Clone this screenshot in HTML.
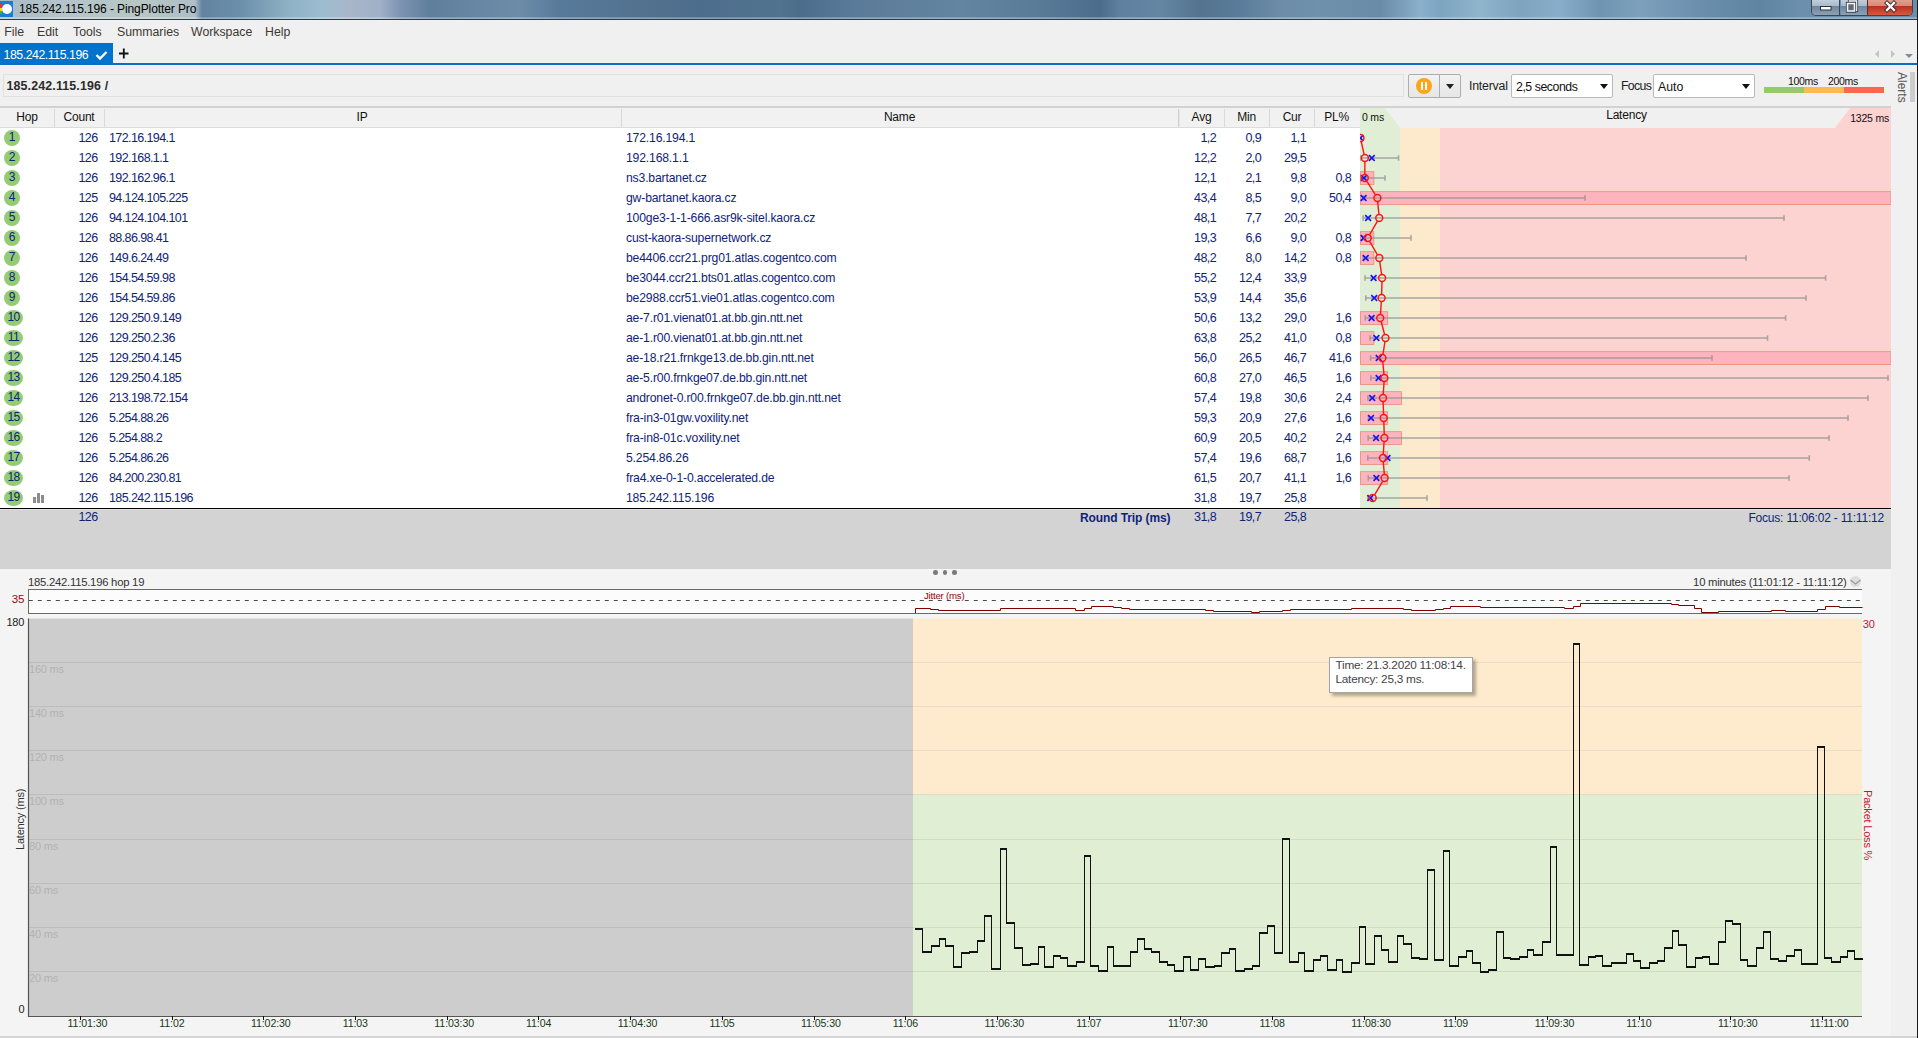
<!DOCTYPE html><html><head><meta charset="utf-8"><style>
*{margin:0;padding:0;box-sizing:border-box}
html,body{width:1918px;height:1038px;overflow:hidden;background:#f0f0f0;font-family:"Liberation Sans",sans-serif;font-size:12px;color:#222}
.a{position:absolute;white-space:nowrap;line-height:1}
.t{color:#10237a;font-size:12px;letter-spacing:-0.35px}
.n{color:#10237a;font-size:12px;letter-spacing:-0.2px}
.hc{color:#111;font-size:12px}
svg{position:absolute;left:0;top:0;overflow:visible}
</style></head><body><div class="a" style="left:0;top:0;width:1918px;height:19px;background:linear-gradient(90deg,#a8bac4 0.00%,#b4c4cb 3.13%,#b8c7c4 7.30%,#adbfc8 10.17%,#6283a0 10.53%,#6b8faa 12.51%,#90b2c6 15.12%,#9cbcd0 16.68%,#a8b6ca 18.25%,#a0b0c8 19.81%,#7d94b2 20.86%,#5f7f9c 22.42%,#6787a4 25.03%,#6c8ca8 27.11%,#587a9a 29.20%,#52728f 33.37%,#4d6d8c 36.50%,#52738f 40.67%,#4c6c8b 41.71%,#5a7a99 44.32%,#5f7f9c 46.92%,#6385a2 50.05%,#5a7b98 54.22%,#4c6c8b 57.35%,#5f809e 58.39%,#6586a3 60.48%,#53738f 62.57%,#5b7c9a 64.65%,#6c8ca8 66.74%,#7091ac 68.82%,#6a8ba7 71.95%,#8ab0cc 74.04%,#7da4c0 75.08%,#8fb4cc 77.16%,#7ea4bf 79.25%,#88adca 81.33%,#6e94b2 83.42%,#7da1bc 85.51%,#6a8eac 88.63%,#5f84a2 91.76%,#6b8fad 93.85%,#6a8eac 100.00%)"></div>
<div class="a" style="left:0;top:17px;width:1918px;height:2px;background:linear-gradient(180deg,rgba(255,255,255,0.15),rgba(255,255,255,0.4))"></div>
<div class="a" style="left:0;top:19px;width:1918px;height:1px;background:#2a3a48"></div>
<div class="a" style="left:0px;top:1px;width:13px;height:16px;background:#1a7fd4;"></div>
<div class="a" style="left:2px;top:4px;width:10px;height:10px;border-radius:50%;background:#fff"></div>
<div class="a" style="left:0px;top:4px;width:2px;height:3px;background:#e33"></div>
<div class="a" style="left:0px;top:8px;width:2px;height:3px;background:#fc3"></div>
<div class="a" style="left:0px;top:11px;width:2px;height:3px;background:#3b3"></div>
<div class="a " style="left:19px;top:2.84px;font-size:12px;color:#000;letter-spacing:-0.1px">185.242.115.196 - PingPlotter Pro</div>
<div class="a" style="left:1811px;top:-2px;width:102px;height:18px;border:1px solid #3a4654;border-top:none;border-radius:0 0 5px 5px;overflow:hidden"><div style="position:absolute;left:0;top:0;width:28px;height:17px;background:linear-gradient(180deg,#c9d6e2 0%,#a9bacb 45%,#6f879e 50%,#8ba1b6 100%);border-right:1px solid #3a4654"></div><div style="position:absolute;left:29px;top:0;width:26px;height:17px;background:linear-gradient(180deg,#c9d6e2 0%,#a9bacb 45%,#6f879e 50%,#8ba1b6 100%)"></div><div style="position:absolute;left:55px;top:0;width:47px;height:17px;background:linear-gradient(180deg,#e9a394 0%,#d88a78 45%,#b8331f 50%,#d45a3e 100%);border-left:1px solid #5a2a20"></div></div>
<svg width="1918" height="1038"><rect x="1820.5" y="6.5" width="10.5" height="3.5" fill="#fff" stroke="#2a3440" stroke-width="1"/><rect x="1849.5" y="1" width="7" height="9.5" fill="none" stroke="#2a3440" stroke-width="3.2"/><rect x="1849.5" y="1" width="7" height="9.5" fill="none" stroke="#f4f4f4" stroke-width="1.6"/><rect x="1847.5" y="3.5" width="7" height="7.5" fill="#5c6b78" stroke="#2a3440" stroke-width="3.2"/><rect x="1847.5" y="3.5" width="7" height="7.5" fill="#5c6b78" stroke="#f4f4f4" stroke-width="1.6"/><path d="M1887 3 L1894 10 M1894 3 L1887 10" stroke="#3a2a2a" stroke-width="4.2" stroke-linecap="square"/><path d="M1887 3 L1894 10 M1894 3 L1887 10" stroke="#fafafa" stroke-width="2.4" stroke-linecap="square"/></svg>
<div class="a" style="left:1917px;top:0px;width:1px;height:1038px;background:#1a1a1a;"></div>
<div class="a " style="left:4.2px;top:25.59px;font-size:12.3px;color:#3d3833">File</div>
<div class="a " style="left:37px;top:25.59px;font-size:12.3px;color:#3d3833">Edit</div>
<div class="a " style="left:73px;top:25.59px;font-size:12.3px;color:#3d3833">Tools</div>
<div class="a " style="left:117px;top:25.59px;font-size:12.3px;color:#3d3833">Summaries</div>
<div class="a " style="left:191px;top:25.59px;font-size:12.3px;color:#3d3833">Workspace</div>
<div class="a " style="left:265px;top:25.59px;font-size:12.3px;color:#3d3833">Help</div>
<div class="a" style="left:0px;top:43px;width:113px;height:22px;background:#0074cc;"></div>
<div class="a" style="left:0px;top:63px;width:1917px;height:2px;background:#0a6fc4;"></div>
<div class="a " style="left:3.5px;top:48.59px;font-size:12.3px;color:#fff;letter-spacing:-0.45px">185.242.115.196</div>
<svg width="1918" height="1038" style="left:0;top:0"><path d="M96.5 55 L100 58.5 L106.5 52" stroke="#fff" stroke-width="2.4" fill="none"/><path d="M119 53.5 H128.5 M123.8 48.5 V58.5" stroke="#111" stroke-width="1.8" fill="none"/><path d="M1879 50 L1875 54 L1879 58 Z M1891 50 L1895 54 L1891 58 Z" fill="#c4c4c4"/><path d="M1905 54 L1913 54 L1909 58 Z" fill="#8a8a8a"/></svg>
<div class="a" style="left:3px;top:74px;width:1401px;height:23px;background:#f0f0f0;border:1px solid #e0e0e0;"></div>
<div class="a " style="left:6.5px;top:79.5px;font-size:12.4px;color:#2b2b2b;font-weight:bold;letter-spacing:0.15px">185.242.115.196 /</div>
<div class="a" style="left:1408px;top:74px;width:53px;height:24px;border:1px solid #adadad;border-radius:2px;background:linear-gradient(180deg,#f2f2f2,#e6e6e6)"></div>
<div class="a" style="left:1439px;top:75px;width:1px;height:22px;background:#adadad;"></div>
<div class="a" style="left:1416px;top:78px;width:16px;height:16px;border-radius:50%;background:#fba51a"></div>
<div class="a" style="left:1421px;top:82px;width:2px;height:8px;background:#fff;"></div>
<div class="a" style="left:1425px;top:82px;width:2px;height:8px;background:#fff;"></div>
<div class="a " style="left:1469px;top:79.59px;font-size:12.3px;color:#222;letter-spacing:-0.2px">Interval</div>
<div class="a" style="left:1511px;top:74px;width:102px;height:24px;border:1px solid #b9b9b9;border-radius:2px;background:#fff"></div>
<div class="a " style="left:1516px;top:80.59px;font-size:12.3px;color:#111;letter-spacing:-0.45px">2,5 seconds</div>
<div class="a " style="left:1621px;top:79.59px;font-size:12.3px;color:#222;letter-spacing:-0.65px">Focus</div>
<div class="a" style="left:1653px;top:74px;width:102px;height:24px;border:1px solid #b9b9b9;border-radius:2px;background:#fff"></div>
<div class="a " style="left:1658px;top:80.59px;font-size:12.3px;color:#111">Auto</div>
<svg width="1918" height="1038"><path d="M1446 84 L1454 84 L1450 89 Z" fill="#222"/><path d="M1600 84 L1608 84 L1604 89 Z" fill="#111"/><path d="M1742 84 L1750 84 L1746 89 Z" fill="#111"/></svg>
<div class="a" style="left:1764px;top:87px;width:40px;height:6px;background:#95c96c;"></div>
<div class="a" style="left:1804px;top:87px;width:40px;height:6px;background:#fdbb4f;"></div>
<div class="a" style="left:1844px;top:87px;width:40px;height:6px;background:#fb6552;"></div>
<div class="a " style="left:1603px;width:400px;top:76.11px;text-align:center;font-size:10.5px;color:#111;letter-spacing:-0.3px">100ms</div>
<div class="a " style="left:1643px;width:400px;top:76.11px;text-align:center;font-size:10.5px;color:#111;letter-spacing:-0.3px">200ms</div>
<div class="a" style="left:1894px;top:72px;font-size:12px;color:#555;transform-origin:0 0;transform:translate(14px,0) rotate(90deg)">Alerts</div>
<div class="a" style="left:1910px;top:72px;width:5px;height:30px;background:#cdcdcd;"></div>
<div class="a" style="left:0px;top:106px;width:1891px;height:2px;background:#d2d2d2;"></div>
<div class="a" style="left:0px;top:108px;width:1360px;height:19px;background:#f1f1f1;"></div>
<div class="a" style="left:0px;top:127px;width:1360px;height:1px;background:#dcdcdc;"></div>
<div class="a" style="left:54px;top:109px;width:1px;height:18px;background:#d9d9d9;"></div>
<div class="a" style="left:104px;top:109px;width:1px;height:18px;background:#d9d9d9;"></div>
<div class="a" style="left:621px;top:109px;width:1px;height:18px;background:#d9d9d9;"></div>
<div class="a" style="left:1224px;top:109px;width:1px;height:18px;background:#d9d9d9;"></div>
<div class="a" style="left:1269px;top:109px;width:1px;height:18px;background:#d9d9d9;"></div>
<div class="a" style="left:1314px;top:109px;width:1px;height:18px;background:#d9d9d9;"></div>
<div class="a" style="left:1178px;top:109px;width:1px;height:18px;background:#cfcfcf;"></div>
<div class="a" style="left:1179px;top:109px;width:1px;height:18px;background:#e8e8e8;"></div>
<div class="a " style="left:-173px;width:400px;top:110.84px;text-align:center;font-size:12px;color:#111;letter-spacing:-0.2px">Hop</div>
<div class="a " style="left:-121px;width:400px;top:110.84px;text-align:center;font-size:12px;color:#111;letter-spacing:-0.2px">Count</div>
<div class="a " style="left:162px;width:400px;top:110.84px;text-align:center;font-size:12px;color:#111;letter-spacing:-0.2px">IP</div>
<div class="a " style="left:699.5px;width:400px;top:110.84px;text-align:center;font-size:12px;color:#111;letter-spacing:-0.2px">Name</div>
<div class="a " style="left:1001.5px;width:400px;top:110.84px;text-align:center;font-size:12px;color:#111;letter-spacing:-0.2px">Avg</div>
<div class="a " style="left:1046.5px;width:400px;top:110.84px;text-align:center;font-size:12px;color:#111;letter-spacing:-0.2px">Min</div>
<div class="a " style="left:1092px;width:400px;top:110.84px;text-align:center;font-size:12px;color:#111;letter-spacing:-0.2px">Cur</div>
<div class="a " style="left:1136.5px;width:400px;top:110.84px;text-align:center;font-size:12px;color:#111;letter-spacing:-0.2px">PL%</div>
<div class="a" style="left:0px;top:128px;width:1360px;height:380px;background:#ffffff;"></div>
<div class="a" style="left:0px;top:508px;width:1891px;height:1px;background:#000;"></div>
<div class="a" style="left:0px;top:509px;width:1891px;height:60px;background:#d3d3d3;"></div>
<div class="a" style="left:0px;top:509px;width:1891px;height:1px;background:#e2e2e2;"></div>
<div class="a" style="left:4px;top:130px;width:16px;height:16px;border-radius:50%;background:#93cc73"></div>
<div class="a " style="left:-188px;width:400px;top:130.54px;text-align:center;font-size:12px;color:#10237a">1</div>
<div class="a t" style="right:1820.5px;top:131.62px;text-align:right;font-size:12.5px;letter-spacing:-0.6px">126</div>
<div class="a t" style="left:109px;top:131.62px;font-size:12.5px;letter-spacing:-0.6px">172.16.194.1</div>
<div class="a n" style="left:626px;top:131.87px;font-size:12.2px;letter-spacing:-0.17px">172.16.194.1</div>
<div class="a t" style="right:702px;top:131.62px;text-align:right;font-size:12.5px;letter-spacing:-0.6px">1,2</div>
<div class="a t" style="right:657px;top:131.62px;text-align:right;font-size:12.5px;letter-spacing:-0.6px">0,9</div>
<div class="a t" style="right:612px;top:131.62px;text-align:right;font-size:12.5px;letter-spacing:-0.6px">1,1</div>
<div class="a" style="left:4px;top:150px;width:16px;height:16px;border-radius:50%;background:#93cc73"></div>
<div class="a " style="left:-188px;width:400px;top:150.54px;text-align:center;font-size:12px;color:#10237a">2</div>
<div class="a t" style="right:1820.5px;top:151.62px;text-align:right;font-size:12.5px;letter-spacing:-0.6px">126</div>
<div class="a t" style="left:109px;top:151.62px;font-size:12.5px;letter-spacing:-0.6px">192.168.1.1</div>
<div class="a n" style="left:626px;top:151.87px;font-size:12.2px;letter-spacing:-0.17px">192.168.1.1</div>
<div class="a t" style="right:702px;top:151.62px;text-align:right;font-size:12.5px;letter-spacing:-0.6px">12,2</div>
<div class="a t" style="right:657px;top:151.62px;text-align:right;font-size:12.5px;letter-spacing:-0.6px">2,0</div>
<div class="a t" style="right:612px;top:151.62px;text-align:right;font-size:12.5px;letter-spacing:-0.6px">29,5</div>
<div class="a" style="left:4px;top:170px;width:16px;height:16px;border-radius:50%;background:#93cc73"></div>
<div class="a " style="left:-188px;width:400px;top:170.54px;text-align:center;font-size:12px;color:#10237a">3</div>
<div class="a t" style="right:1820.5px;top:171.62px;text-align:right;font-size:12.5px;letter-spacing:-0.6px">126</div>
<div class="a t" style="left:109px;top:171.62px;font-size:12.5px;letter-spacing:-0.6px">192.162.96.1</div>
<div class="a n" style="left:626px;top:171.87px;font-size:12.2px;letter-spacing:-0.17px">ns3.bartanet.cz</div>
<div class="a t" style="right:702px;top:171.62px;text-align:right;font-size:12.5px;letter-spacing:-0.6px">12,1</div>
<div class="a t" style="right:657px;top:171.62px;text-align:right;font-size:12.5px;letter-spacing:-0.6px">2,1</div>
<div class="a t" style="right:612px;top:171.62px;text-align:right;font-size:12.5px;letter-spacing:-0.6px">9,8</div>
<div class="a t" style="right:567px;top:171.62px;text-align:right;font-size:12.5px;letter-spacing:-0.6px">0,8</div>
<div class="a" style="left:4px;top:190px;width:16px;height:16px;border-radius:50%;background:#93cc73"></div>
<div class="a " style="left:-188px;width:400px;top:190.54px;text-align:center;font-size:12px;color:#10237a">4</div>
<div class="a t" style="right:1820.5px;top:191.62px;text-align:right;font-size:12.5px;letter-spacing:-0.6px">125</div>
<div class="a t" style="left:109px;top:191.62px;font-size:12.5px;letter-spacing:-0.6px">94.124.105.225</div>
<div class="a n" style="left:626px;top:191.87px;font-size:12.2px;letter-spacing:-0.17px">gw-bartanet.kaora.cz</div>
<div class="a t" style="right:702px;top:191.62px;text-align:right;font-size:12.5px;letter-spacing:-0.6px">43,4</div>
<div class="a t" style="right:657px;top:191.62px;text-align:right;font-size:12.5px;letter-spacing:-0.6px">8,5</div>
<div class="a t" style="right:612px;top:191.62px;text-align:right;font-size:12.5px;letter-spacing:-0.6px">9,0</div>
<div class="a t" style="right:567px;top:191.62px;text-align:right;font-size:12.5px;letter-spacing:-0.6px">50,4</div>
<div class="a" style="left:4px;top:210px;width:16px;height:16px;border-radius:50%;background:#93cc73"></div>
<div class="a " style="left:-188px;width:400px;top:210.54px;text-align:center;font-size:12px;color:#10237a">5</div>
<div class="a t" style="right:1820.5px;top:211.62px;text-align:right;font-size:12.5px;letter-spacing:-0.6px">126</div>
<div class="a t" style="left:109px;top:211.62px;font-size:12.5px;letter-spacing:-0.6px">94.124.104.101</div>
<div class="a n" style="left:626px;top:211.87px;font-size:12.2px;letter-spacing:-0.17px">100ge3-1-1-666.asr9k-sitel.kaora.cz</div>
<div class="a t" style="right:702px;top:211.62px;text-align:right;font-size:12.5px;letter-spacing:-0.6px">48,1</div>
<div class="a t" style="right:657px;top:211.62px;text-align:right;font-size:12.5px;letter-spacing:-0.6px">7,7</div>
<div class="a t" style="right:612px;top:211.62px;text-align:right;font-size:12.5px;letter-spacing:-0.6px">20,2</div>
<div class="a" style="left:4px;top:230px;width:16px;height:16px;border-radius:50%;background:#93cc73"></div>
<div class="a " style="left:-188px;width:400px;top:230.54px;text-align:center;font-size:12px;color:#10237a">6</div>
<div class="a t" style="right:1820.5px;top:231.62px;text-align:right;font-size:12.5px;letter-spacing:-0.6px">126</div>
<div class="a t" style="left:109px;top:231.62px;font-size:12.5px;letter-spacing:-0.6px">88.86.98.41</div>
<div class="a n" style="left:626px;top:231.87px;font-size:12.2px;letter-spacing:-0.17px">cust-kaora-supernetwork.cz</div>
<div class="a t" style="right:702px;top:231.62px;text-align:right;font-size:12.5px;letter-spacing:-0.6px">19,3</div>
<div class="a t" style="right:657px;top:231.62px;text-align:right;font-size:12.5px;letter-spacing:-0.6px">6,6</div>
<div class="a t" style="right:612px;top:231.62px;text-align:right;font-size:12.5px;letter-spacing:-0.6px">9,0</div>
<div class="a t" style="right:567px;top:231.62px;text-align:right;font-size:12.5px;letter-spacing:-0.6px">0,8</div>
<div class="a" style="left:4px;top:250px;width:16px;height:16px;border-radius:50%;background:#93cc73"></div>
<div class="a " style="left:-188px;width:400px;top:250.54px;text-align:center;font-size:12px;color:#10237a">7</div>
<div class="a t" style="right:1820.5px;top:251.62px;text-align:right;font-size:12.5px;letter-spacing:-0.6px">126</div>
<div class="a t" style="left:109px;top:251.62px;font-size:12.5px;letter-spacing:-0.6px">149.6.24.49</div>
<div class="a n" style="left:626px;top:251.87px;font-size:12.2px;letter-spacing:-0.17px">be4406.ccr21.prg01.atlas.cogentco.com</div>
<div class="a t" style="right:702px;top:251.62px;text-align:right;font-size:12.5px;letter-spacing:-0.6px">48,2</div>
<div class="a t" style="right:657px;top:251.62px;text-align:right;font-size:12.5px;letter-spacing:-0.6px">8,0</div>
<div class="a t" style="right:612px;top:251.62px;text-align:right;font-size:12.5px;letter-spacing:-0.6px">14,2</div>
<div class="a t" style="right:567px;top:251.62px;text-align:right;font-size:12.5px;letter-spacing:-0.6px">0,8</div>
<div class="a" style="left:4px;top:270px;width:16px;height:16px;border-radius:50%;background:#93cc73"></div>
<div class="a " style="left:-188px;width:400px;top:270.54px;text-align:center;font-size:12px;color:#10237a">8</div>
<div class="a t" style="right:1820.5px;top:271.62px;text-align:right;font-size:12.5px;letter-spacing:-0.6px">126</div>
<div class="a t" style="left:109px;top:271.62px;font-size:12.5px;letter-spacing:-0.6px">154.54.59.98</div>
<div class="a n" style="left:626px;top:271.87px;font-size:12.2px;letter-spacing:-0.17px">be3044.ccr21.bts01.atlas.cogentco.com</div>
<div class="a t" style="right:702px;top:271.62px;text-align:right;font-size:12.5px;letter-spacing:-0.6px">55,2</div>
<div class="a t" style="right:657px;top:271.62px;text-align:right;font-size:12.5px;letter-spacing:-0.6px">12,4</div>
<div class="a t" style="right:612px;top:271.62px;text-align:right;font-size:12.5px;letter-spacing:-0.6px">33,9</div>
<div class="a" style="left:4px;top:290px;width:16px;height:16px;border-radius:50%;background:#93cc73"></div>
<div class="a " style="left:-188px;width:400px;top:290.54px;text-align:center;font-size:12px;color:#10237a">9</div>
<div class="a t" style="right:1820.5px;top:291.62px;text-align:right;font-size:12.5px;letter-spacing:-0.6px">126</div>
<div class="a t" style="left:109px;top:291.62px;font-size:12.5px;letter-spacing:-0.6px">154.54.59.86</div>
<div class="a n" style="left:626px;top:291.87px;font-size:12.2px;letter-spacing:-0.17px">be2988.ccr51.vie01.atlas.cogentco.com</div>
<div class="a t" style="right:702px;top:291.62px;text-align:right;font-size:12.5px;letter-spacing:-0.6px">53,9</div>
<div class="a t" style="right:657px;top:291.62px;text-align:right;font-size:12.5px;letter-spacing:-0.6px">14,4</div>
<div class="a t" style="right:612px;top:291.62px;text-align:right;font-size:12.5px;letter-spacing:-0.6px">35,6</div>
<div class="a" style="left:4px;top:310px;width:19px;height:16px;border-radius:50%;background:#93cc73"></div>
<div class="a " style="left:-186.5px;width:400px;top:310.54px;text-align:center;font-size:12px;color:#10237a;letter-spacing:-0.6px">10</div>
<div class="a t" style="right:1820.5px;top:311.62px;text-align:right;font-size:12.5px;letter-spacing:-0.6px">126</div>
<div class="a t" style="left:109px;top:311.62px;font-size:12.5px;letter-spacing:-0.6px">129.250.9.149</div>
<div class="a n" style="left:626px;top:311.87px;font-size:12.2px;letter-spacing:-0.17px">ae-7.r01.vienat01.at.bb.gin.ntt.net</div>
<div class="a t" style="right:702px;top:311.62px;text-align:right;font-size:12.5px;letter-spacing:-0.6px">50,6</div>
<div class="a t" style="right:657px;top:311.62px;text-align:right;font-size:12.5px;letter-spacing:-0.6px">13,2</div>
<div class="a t" style="right:612px;top:311.62px;text-align:right;font-size:12.5px;letter-spacing:-0.6px">29,0</div>
<div class="a t" style="right:567px;top:311.62px;text-align:right;font-size:12.5px;letter-spacing:-0.6px">1,6</div>
<div class="a" style="left:4px;top:330px;width:19px;height:16px;border-radius:50%;background:#93cc73"></div>
<div class="a " style="left:-186.5px;width:400px;top:330.54px;text-align:center;font-size:12px;color:#10237a;letter-spacing:-0.6px">11</div>
<div class="a t" style="right:1820.5px;top:331.62px;text-align:right;font-size:12.5px;letter-spacing:-0.6px">126</div>
<div class="a t" style="left:109px;top:331.62px;font-size:12.5px;letter-spacing:-0.6px">129.250.2.36</div>
<div class="a n" style="left:626px;top:331.87px;font-size:12.2px;letter-spacing:-0.17px">ae-1.r00.vienat01.at.bb.gin.ntt.net</div>
<div class="a t" style="right:702px;top:331.62px;text-align:right;font-size:12.5px;letter-spacing:-0.6px">63,8</div>
<div class="a t" style="right:657px;top:331.62px;text-align:right;font-size:12.5px;letter-spacing:-0.6px">25,2</div>
<div class="a t" style="right:612px;top:331.62px;text-align:right;font-size:12.5px;letter-spacing:-0.6px">41,0</div>
<div class="a t" style="right:567px;top:331.62px;text-align:right;font-size:12.5px;letter-spacing:-0.6px">0,8</div>
<div class="a" style="left:4px;top:350px;width:19px;height:16px;border-radius:50%;background:#93cc73"></div>
<div class="a " style="left:-186.5px;width:400px;top:350.54px;text-align:center;font-size:12px;color:#10237a;letter-spacing:-0.6px">12</div>
<div class="a t" style="right:1820.5px;top:351.62px;text-align:right;font-size:12.5px;letter-spacing:-0.6px">125</div>
<div class="a t" style="left:109px;top:351.62px;font-size:12.5px;letter-spacing:-0.6px">129.250.4.145</div>
<div class="a n" style="left:626px;top:351.87px;font-size:12.2px;letter-spacing:-0.17px">ae-18.r21.frnkge13.de.bb.gin.ntt.net</div>
<div class="a t" style="right:702px;top:351.62px;text-align:right;font-size:12.5px;letter-spacing:-0.6px">56,0</div>
<div class="a t" style="right:657px;top:351.62px;text-align:right;font-size:12.5px;letter-spacing:-0.6px">26,5</div>
<div class="a t" style="right:612px;top:351.62px;text-align:right;font-size:12.5px;letter-spacing:-0.6px">46,7</div>
<div class="a t" style="right:567px;top:351.62px;text-align:right;font-size:12.5px;letter-spacing:-0.6px">41,6</div>
<div class="a" style="left:4px;top:370px;width:19px;height:16px;border-radius:50%;background:#93cc73"></div>
<div class="a " style="left:-186.5px;width:400px;top:370.54px;text-align:center;font-size:12px;color:#10237a;letter-spacing:-0.6px">13</div>
<div class="a t" style="right:1820.5px;top:371.62px;text-align:right;font-size:12.5px;letter-spacing:-0.6px">126</div>
<div class="a t" style="left:109px;top:371.62px;font-size:12.5px;letter-spacing:-0.6px">129.250.4.185</div>
<div class="a n" style="left:626px;top:371.87px;font-size:12.2px;letter-spacing:-0.17px">ae-5.r00.frnkge07.de.bb.gin.ntt.net</div>
<div class="a t" style="right:702px;top:371.62px;text-align:right;font-size:12.5px;letter-spacing:-0.6px">60,8</div>
<div class="a t" style="right:657px;top:371.62px;text-align:right;font-size:12.5px;letter-spacing:-0.6px">27,0</div>
<div class="a t" style="right:612px;top:371.62px;text-align:right;font-size:12.5px;letter-spacing:-0.6px">46,5</div>
<div class="a t" style="right:567px;top:371.62px;text-align:right;font-size:12.5px;letter-spacing:-0.6px">1,6</div>
<div class="a" style="left:4px;top:390px;width:19px;height:16px;border-radius:50%;background:#93cc73"></div>
<div class="a " style="left:-186.5px;width:400px;top:390.54px;text-align:center;font-size:12px;color:#10237a;letter-spacing:-0.6px">14</div>
<div class="a t" style="right:1820.5px;top:391.62px;text-align:right;font-size:12.5px;letter-spacing:-0.6px">126</div>
<div class="a t" style="left:109px;top:391.62px;font-size:12.5px;letter-spacing:-0.6px">213.198.72.154</div>
<div class="a n" style="left:626px;top:391.87px;font-size:12.2px;letter-spacing:-0.17px">andronet-0.r00.frnkge07.de.bb.gin.ntt.net</div>
<div class="a t" style="right:702px;top:391.62px;text-align:right;font-size:12.5px;letter-spacing:-0.6px">57,4</div>
<div class="a t" style="right:657px;top:391.62px;text-align:right;font-size:12.5px;letter-spacing:-0.6px">19,8</div>
<div class="a t" style="right:612px;top:391.62px;text-align:right;font-size:12.5px;letter-spacing:-0.6px">30,6</div>
<div class="a t" style="right:567px;top:391.62px;text-align:right;font-size:12.5px;letter-spacing:-0.6px">2,4</div>
<div class="a" style="left:4px;top:410px;width:19px;height:16px;border-radius:50%;background:#93cc73"></div>
<div class="a " style="left:-186.5px;width:400px;top:410.54px;text-align:center;font-size:12px;color:#10237a;letter-spacing:-0.6px">15</div>
<div class="a t" style="right:1820.5px;top:411.62px;text-align:right;font-size:12.5px;letter-spacing:-0.6px">126</div>
<div class="a t" style="left:109px;top:411.62px;font-size:12.5px;letter-spacing:-0.6px">5.254.88.26</div>
<div class="a n" style="left:626px;top:411.87px;font-size:12.2px;letter-spacing:-0.17px">fra-in3-01gw.voxility.net</div>
<div class="a t" style="right:702px;top:411.62px;text-align:right;font-size:12.5px;letter-spacing:-0.6px">59,3</div>
<div class="a t" style="right:657px;top:411.62px;text-align:right;font-size:12.5px;letter-spacing:-0.6px">20,9</div>
<div class="a t" style="right:612px;top:411.62px;text-align:right;font-size:12.5px;letter-spacing:-0.6px">27,6</div>
<div class="a t" style="right:567px;top:411.62px;text-align:right;font-size:12.5px;letter-spacing:-0.6px">1,6</div>
<div class="a" style="left:4px;top:430px;width:19px;height:16px;border-radius:50%;background:#93cc73"></div>
<div class="a " style="left:-186.5px;width:400px;top:430.54px;text-align:center;font-size:12px;color:#10237a;letter-spacing:-0.6px">16</div>
<div class="a t" style="right:1820.5px;top:431.62px;text-align:right;font-size:12.5px;letter-spacing:-0.6px">126</div>
<div class="a t" style="left:109px;top:431.62px;font-size:12.5px;letter-spacing:-0.6px">5.254.88.2</div>
<div class="a n" style="left:626px;top:431.87px;font-size:12.2px;letter-spacing:-0.17px">fra-in8-01c.voxility.net</div>
<div class="a t" style="right:702px;top:431.62px;text-align:right;font-size:12.5px;letter-spacing:-0.6px">60,9</div>
<div class="a t" style="right:657px;top:431.62px;text-align:right;font-size:12.5px;letter-spacing:-0.6px">20,5</div>
<div class="a t" style="right:612px;top:431.62px;text-align:right;font-size:12.5px;letter-spacing:-0.6px">40,2</div>
<div class="a t" style="right:567px;top:431.62px;text-align:right;font-size:12.5px;letter-spacing:-0.6px">2,4</div>
<div class="a" style="left:4px;top:450px;width:19px;height:16px;border-radius:50%;background:#93cc73"></div>
<div class="a " style="left:-186.5px;width:400px;top:450.54px;text-align:center;font-size:12px;color:#10237a;letter-spacing:-0.6px">17</div>
<div class="a t" style="right:1820.5px;top:451.62px;text-align:right;font-size:12.5px;letter-spacing:-0.6px">126</div>
<div class="a t" style="left:109px;top:451.62px;font-size:12.5px;letter-spacing:-0.6px">5.254.86.26</div>
<div class="a n" style="left:626px;top:451.87px;font-size:12.2px;letter-spacing:-0.17px">5.254.86.26</div>
<div class="a t" style="right:702px;top:451.62px;text-align:right;font-size:12.5px;letter-spacing:-0.6px">57,4</div>
<div class="a t" style="right:657px;top:451.62px;text-align:right;font-size:12.5px;letter-spacing:-0.6px">19,6</div>
<div class="a t" style="right:612px;top:451.62px;text-align:right;font-size:12.5px;letter-spacing:-0.6px">68,7</div>
<div class="a t" style="right:567px;top:451.62px;text-align:right;font-size:12.5px;letter-spacing:-0.6px">1,6</div>
<div class="a" style="left:4px;top:470px;width:19px;height:16px;border-radius:50%;background:#93cc73"></div>
<div class="a " style="left:-186.5px;width:400px;top:470.54px;text-align:center;font-size:12px;color:#10237a;letter-spacing:-0.6px">18</div>
<div class="a t" style="right:1820.5px;top:471.62px;text-align:right;font-size:12.5px;letter-spacing:-0.6px">126</div>
<div class="a t" style="left:109px;top:471.62px;font-size:12.5px;letter-spacing:-0.6px">84.200.230.81</div>
<div class="a n" style="left:626px;top:471.87px;font-size:12.2px;letter-spacing:-0.17px">fra4.xe-0-1-0.accelerated.de</div>
<div class="a t" style="right:702px;top:471.62px;text-align:right;font-size:12.5px;letter-spacing:-0.6px">61,5</div>
<div class="a t" style="right:657px;top:471.62px;text-align:right;font-size:12.5px;letter-spacing:-0.6px">20,7</div>
<div class="a t" style="right:612px;top:471.62px;text-align:right;font-size:12.5px;letter-spacing:-0.6px">41,1</div>
<div class="a t" style="right:567px;top:471.62px;text-align:right;font-size:12.5px;letter-spacing:-0.6px">1,6</div>
<div class="a" style="left:4px;top:490px;width:19px;height:16px;border-radius:50%;background:#93cc73"></div>
<div class="a " style="left:-186.5px;width:400px;top:490.54px;text-align:center;font-size:12px;color:#10237a;letter-spacing:-0.6px">19</div>
<div class="a t" style="right:1820.5px;top:491.62px;text-align:right;font-size:12.5px;letter-spacing:-0.6px">126</div>
<div class="a t" style="left:109px;top:491.62px;font-size:12.5px;letter-spacing:-0.6px">185.242.115.196</div>
<div class="a n" style="left:626px;top:491.87px;font-size:12.2px;letter-spacing:-0.17px">185.242.115.196</div>
<div class="a t" style="right:702px;top:491.62px;text-align:right;font-size:12.5px;letter-spacing:-0.6px">31,8</div>
<div class="a t" style="right:657px;top:491.62px;text-align:right;font-size:12.5px;letter-spacing:-0.6px">19,7</div>
<div class="a t" style="right:612px;top:491.62px;text-align:right;font-size:12.5px;letter-spacing:-0.6px">25,8</div>
<div class="a" style="left:33px;top:497px;width:2.5px;height:6px;background:#8c8c8c;"></div>
<div class="a" style="left:37px;top:493.3px;width:2.5px;height:9.7px;background:#8c8c8c;"></div>
<div class="a" style="left:41px;top:495.2px;width:2.5px;height:7.8px;background:#8c8c8c;"></div>
<div class="a t" style="right:1820.5px;top:511.42px;text-align:right;font-size:12.5px;letter-spacing:-0.6px">126</div>
<div class="a " style="right:747.5px;top:511.84px;text-align:right;font-size:12px;color:#10237a;font-weight:bold;letter-spacing:-0.1px">Round Trip (ms)</div>
<div class="a t" style="right:702px;top:511.42px;text-align:right;font-size:12.5px;letter-spacing:-0.6px">31,8</div>
<div class="a t" style="right:657px;top:511.42px;text-align:right;font-size:12.5px;letter-spacing:-0.6px">19,7</div>
<div class="a t" style="right:612px;top:511.42px;text-align:right;font-size:12.5px;letter-spacing:-0.6px">25,8</div>
<div class="a n" style="right:34px;top:511.84px;text-align:right;font-size:12px;letter-spacing:-0.2px">Focus: 11:06:02 - 11:11:12</div>
<svg width="1918" height="1038"><defs><clipPath id="lc"><rect x="1360" y="100" width="531" height="410"/></clipPath></defs><g clip-path="url(#lc)"><rect x="1360" y="128" width="40" height="380" fill="#dfeed4"/><rect x="1400" y="128" width="40" height="380" fill="#fde9cc"/><rect x="1440" y="128" width="451" height="380" fill="#fdd3d1"/><polygon points="1360,108 1385,108 1400,128 1360,128" fill="#dfeed4"/><polygon points="1850,108 1891,108 1891,128 1835,128" fill="#fdd3d1"/><rect x="1360.4" y="171.7" width="13.46" height="12.8" fill="#feb4be" stroke="#ea8a78" stroke-width="0.8"/><rect x="1360.4" y="191.7" width="530.60" height="12.8" fill="#feb4be" stroke="#ea8a78" stroke-width="0.8"/><rect x="1360.4" y="231.7" width="13.46" height="12.8" fill="#feb4be" stroke="#ea8a78" stroke-width="0.8"/><rect x="1360.4" y="251.7" width="13.46" height="12.8" fill="#feb4be" stroke="#ea8a78" stroke-width="0.8"/><rect x="1360.4" y="311.7" width="27.33" height="12.8" fill="#feb4be" stroke="#ea8a78" stroke-width="0.8"/><rect x="1360.4" y="331.7" width="13.46" height="12.8" fill="#feb4be" stroke="#ea8a78" stroke-width="0.8"/><rect x="1360.4" y="351.7" width="530.60" height="12.8" fill="#feb4be" stroke="#ea8a78" stroke-width="0.8"/><rect x="1360.4" y="371.7" width="27.33" height="12.8" fill="#feb4be" stroke="#ea8a78" stroke-width="0.8"/><rect x="1360.4" y="391.7" width="41.19" height="12.8" fill="#feb4be" stroke="#ea8a78" stroke-width="0.8"/><rect x="1360.4" y="411.7" width="27.33" height="12.8" fill="#feb4be" stroke="#ea8a78" stroke-width="0.8"/><rect x="1360.4" y="431.7" width="41.19" height="12.8" fill="#feb4be" stroke="#ea8a78" stroke-width="0.8"/><rect x="1360.4" y="451.7" width="27.33" height="12.8" fill="#feb4be" stroke="#ea8a78" stroke-width="0.8"/><rect x="1360.4" y="471.7" width="27.33" height="12.8" fill="#feb4be" stroke="#ea8a78" stroke-width="0.8"/><path d="M1360.8 158 H1398.5 M1360.8 155.3 V160.7 M1398.5 155.3 V160.7" stroke="#8f8f8f" stroke-opacity="0.75" stroke-width="1.6" fill="none"/><path d="M1360.8 178 H1385.0 M1360.8 175.3 V180.7 M1385.0 175.3 V180.7" stroke="#8f8f8f" stroke-opacity="0.75" stroke-width="1.6" fill="none"/><path d="M1363.4 198 H1585.0 M1363.4 195.3 V200.7 M1585.0 195.3 V200.7" stroke="#8f8f8f" stroke-opacity="0.75" stroke-width="1.6" fill="none"/><path d="M1363.1 218 H1784.0 M1363.1 215.3 V220.7 M1784.0 215.3 V220.7" stroke="#8f8f8f" stroke-opacity="0.75" stroke-width="1.6" fill="none"/><path d="M1362.6 238 H1411.0 M1362.6 235.3 V240.7 M1411.0 235.3 V240.7" stroke="#8f8f8f" stroke-opacity="0.75" stroke-width="1.6" fill="none"/><path d="M1363.2 258 H1746.0 M1363.2 255.3 V260.7 M1746.0 255.3 V260.7" stroke="#8f8f8f" stroke-opacity="0.75" stroke-width="1.6" fill="none"/><path d="M1365.0 278 H1825.6 M1365.0 275.3 V280.7 M1825.6 275.3 V280.7" stroke="#8f8f8f" stroke-opacity="0.75" stroke-width="1.6" fill="none"/><path d="M1365.8 298 H1806.0 M1365.8 295.3 V300.7 M1806.0 295.3 V300.7" stroke="#8f8f8f" stroke-opacity="0.75" stroke-width="1.6" fill="none"/><path d="M1365.3 318 H1785.6 M1365.3 315.3 V320.7 M1785.6 315.3 V320.7" stroke="#8f8f8f" stroke-opacity="0.75" stroke-width="1.6" fill="none"/><path d="M1370.1 338 H1767.5 M1370.1 335.3 V340.7 M1767.5 335.3 V340.7" stroke="#8f8f8f" stroke-opacity="0.75" stroke-width="1.6" fill="none"/><path d="M1370.6 358 H1712.0 M1370.6 355.3 V360.7 M1712.0 355.3 V360.7" stroke="#8f8f8f" stroke-opacity="0.75" stroke-width="1.6" fill="none"/><path d="M1370.8 378 H1888.0 M1370.8 375.3 V380.7 M1888.0 375.3 V380.7" stroke="#8f8f8f" stroke-opacity="0.75" stroke-width="1.6" fill="none"/><path d="M1367.9 398 H1868.0 M1367.9 395.3 V400.7 M1868.0 395.3 V400.7" stroke="#8f8f8f" stroke-opacity="0.75" stroke-width="1.6" fill="none"/><path d="M1368.4 418 H1848.0 M1368.4 415.3 V420.7 M1848.0 415.3 V420.7" stroke="#8f8f8f" stroke-opacity="0.75" stroke-width="1.6" fill="none"/><path d="M1368.2 438 H1829.0 M1368.2 435.3 V440.7 M1829.0 435.3 V440.7" stroke="#8f8f8f" stroke-opacity="0.75" stroke-width="1.6" fill="none"/><path d="M1367.8 458 H1809.3 M1367.8 455.3 V460.7 M1809.3 455.3 V460.7" stroke="#8f8f8f" stroke-opacity="0.75" stroke-width="1.6" fill="none"/><path d="M1368.3 478 H1789.0 M1368.3 475.3 V480.7 M1789.0 475.3 V480.7" stroke="#8f8f8f" stroke-opacity="0.75" stroke-width="1.6" fill="none"/><path d="M1367.9 498 H1427.0 M1367.9 495.3 V500.7 M1427.0 495.3 V500.7" stroke="#8f8f8f" stroke-opacity="0.75" stroke-width="1.6" fill="none"/><path d="M1357.5 135.1 L1363.3 140.9 M1357.5 140.9 L1363.3 135.1" stroke="#1414f0" stroke-width="1.6"/><path d="M1368.9 155.1 L1374.7 160.9 M1368.9 160.9 L1374.7 155.1" stroke="#1414f0" stroke-width="1.6"/><path d="M1361.0 175.1 L1366.8 180.9 M1361.0 180.9 L1366.8 175.1" stroke="#1414f0" stroke-width="1.6"/><path d="M1360.7 195.1 L1366.5 200.9 M1360.7 200.9 L1366.5 195.1" stroke="#1414f0" stroke-width="1.6"/><path d="M1365.2 215.1 L1371.0 220.9 M1365.2 220.9 L1371.0 215.1" stroke="#1414f0" stroke-width="1.6"/><path d="M1360.7 235.1 L1366.5 240.9 M1360.7 240.9 L1366.5 235.1" stroke="#1414f0" stroke-width="1.6"/><path d="M1362.8 255.1 L1368.6 260.9 M1362.8 260.9 L1368.6 255.1" stroke="#1414f0" stroke-width="1.6"/><path d="M1370.7 275.1 L1376.5 280.9 M1370.7 280.9 L1376.5 275.1" stroke="#1414f0" stroke-width="1.6"/><path d="M1371.3 295.1 L1377.1 300.9 M1371.3 300.9 L1377.1 295.1" stroke="#1414f0" stroke-width="1.6"/><path d="M1368.7 315.1 L1374.5 320.9 M1368.7 320.9 L1374.5 315.1" stroke="#1414f0" stroke-width="1.6"/><path d="M1373.5 335.1 L1379.3 340.9 M1373.5 340.9 L1379.3 335.1" stroke="#1414f0" stroke-width="1.6"/><path d="M1375.8 355.1 L1381.6 360.9 M1375.8 360.9 L1381.6 355.1" stroke="#1414f0" stroke-width="1.6"/><path d="M1375.7 375.1 L1381.5 380.9 M1375.7 380.9 L1381.5 375.1" stroke="#1414f0" stroke-width="1.6"/><path d="M1369.3 395.1 L1375.1 400.9 M1369.3 400.9 L1375.1 395.1" stroke="#1414f0" stroke-width="1.6"/><path d="M1368.1 415.1 L1373.9 420.9 M1368.1 420.9 L1373.9 415.1" stroke="#1414f0" stroke-width="1.6"/><path d="M1373.2 435.1 L1379.0 440.9 M1373.2 440.9 L1379.0 435.1" stroke="#1414f0" stroke-width="1.6"/><path d="M1384.6 455.1 L1390.4 460.9 M1384.6 460.9 L1390.4 455.1" stroke="#1414f0" stroke-width="1.6"/><path d="M1373.5 475.1 L1379.3 480.9 M1373.5 480.9 L1379.3 475.1" stroke="#1414f0" stroke-width="1.6"/><path d="M1367.4 495.1 L1373.2 500.9 M1367.4 500.9 L1373.2 495.1" stroke="#1414f0" stroke-width="1.6"/><path d="M1361.32 141.81 L1364.04 154.19 M1364.87 161.90 L1364.85 174.10 M1366.91 181.31 L1375.29 194.69 M1377.72 201.88 L1378.88 214.12 M1377.29 221.38 L1369.67 234.62 M1369.67 241.38 L1377.33 254.62 M1379.82 261.86 L1381.54 274.14 M1381.98 281.90 L1381.66 294.10 M1381.30 301.89 L1380.50 314.11 M1381.24 321.77 L1384.52 334.23 M1384.92 341.85 L1383.00 354.15 M1382.77 361.88 L1383.95 374.12 M1384.06 381.89 L1383.22 394.11 M1383.11 401.90 L1383.57 414.10 M1383.84 421.90 L1384.24 434.10 M1384.09 441.89 L1383.23 454.11 M1383.28 461.89 L1384.28 474.11 M1382.61 481.35 L1374.71 494.65" fill="none" stroke="#ff1414" stroke-width="1.4"/><circle cx="1360.5" cy="138" r="3.45" fill="none" stroke="#ff1414" stroke-width="1.5"/><circle cx="1364.9" cy="158" r="3.45" fill="none" stroke="#ff1414" stroke-width="1.5"/><circle cx="1364.8" cy="178" r="3.45" fill="none" stroke="#ff1414" stroke-width="1.5"/><circle cx="1377.4" cy="198" r="3.45" fill="none" stroke="#ff1414" stroke-width="1.5"/><circle cx="1379.2" cy="218" r="3.45" fill="none" stroke="#ff1414" stroke-width="1.5"/><circle cx="1367.7" cy="238" r="3.45" fill="none" stroke="#ff1414" stroke-width="1.5"/><circle cx="1379.3" cy="258" r="3.45" fill="none" stroke="#ff1414" stroke-width="1.5"/><circle cx="1382.1" cy="278" r="3.45" fill="none" stroke="#ff1414" stroke-width="1.5"/><circle cx="1381.6" cy="298" r="3.45" fill="none" stroke="#ff1414" stroke-width="1.5"/><circle cx="1380.2" cy="318" r="3.45" fill="none" stroke="#ff1414" stroke-width="1.5"/><circle cx="1385.5" cy="338" r="3.45" fill="none" stroke="#ff1414" stroke-width="1.5"/><circle cx="1382.4" cy="358" r="3.45" fill="none" stroke="#ff1414" stroke-width="1.5"/><circle cx="1384.3" cy="378" r="3.45" fill="none" stroke="#ff1414" stroke-width="1.5"/><circle cx="1383.0" cy="398" r="3.45" fill="none" stroke="#ff1414" stroke-width="1.5"/><circle cx="1383.7" cy="418" r="3.45" fill="none" stroke="#ff1414" stroke-width="1.5"/><circle cx="1384.4" cy="438" r="3.45" fill="none" stroke="#ff1414" stroke-width="1.5"/><circle cx="1383.0" cy="458" r="3.45" fill="none" stroke="#ff1414" stroke-width="1.5"/><circle cx="1384.6" cy="478" r="3.45" fill="none" stroke="#ff1414" stroke-width="1.5"/><circle cx="1372.7" cy="498" r="3.45" fill="none" stroke="#ff1414" stroke-width="1.5"/></g></svg>
<div class="a " style="left:1362px;top:112.11px;font-size:10.5px;color:#111;letter-spacing:-0.2px">0 ms</div>
<div class="a " style="left:1426.5px;width:400px;top:108.84px;text-align:center;font-size:12px;color:#111;letter-spacing:-0.2px">Latency</div>
<div class="a " style="right:29px;top:112.61px;text-align:right;font-size:10.5px;color:#111;letter-spacing:-0.2px">1325 ms</div>
<div class="a" style="left:0px;top:569px;width:1891px;height:468px;background:#f4f4f4;"></div>
<div class="a" style="left:0px;top:1036px;width:1917px;height:2px;background:#d4d4d4;"></div>
<div class="a" style="left:933.0px;top:570.2px;width:4.6px;height:4.6px;border-radius:50%;background:#7a7a7a"></div>
<div class="a" style="left:942.6px;top:570.2px;width:4.6px;height:4.6px;border-radius:50%;background:#7a7a7a"></div>
<div class="a" style="left:952.2px;top:570.2px;width:4.6px;height:4.6px;border-radius:50%;background:#7a7a7a"></div>
<div class="a " style="left:28px;top:576.93px;font-size:11.3px;color:#333;letter-spacing:-0.25px">185.242.115.196 hop 19</div>
<div class="a " style="right:71.5px;top:576.93px;text-align:right;font-size:11.3px;color:#333;letter-spacing:-0.25px">10 minutes (11:01:12 - 11:11:12)</div>
<div class="a" style="left:1850px;top:576px;width:11px;height:11px;border-radius:50%;background:#dedede"></div>
<svg width="1918" height="1038"><rect x="28" y="589.5" width="1834" height="24" fill="#fcfcfc"/><path d="M28.5 589 V614 M28 589.5 H1862 M28 613.5 H1862" stroke="#6a6a6a" stroke-width="1" fill="none"/><path d="M1850.5 580 L1855.5 584 L1860.5 580" stroke="#9a9a9a" stroke-width="1.2" fill="none"/><path d="M28.8 600.5 H1862" stroke="#4a4a4a" stroke-width="1.2" stroke-dasharray="4 5" fill="none"/><path d="M915.5 613 V608.5 H930.5 V609.5 H938.5 V610.5 H1000.5 V608.5 H1075.5 V610.5 H1084.5 V608.5 H1091.5 V606.5 H1113.5 V607.5 H1121.5 V608.5 H1129.5 V609.5 H1205.5 V610.5 H1213.5 V611.5 H1251.5 V612.5 H1259.5 V611.5 H1282.5 V610.5 H1290.5 V609.5 H1351.5 V608.5 H1403.5 V609.5 H1411.5 V610.5 H1435.5 V609.5 H1443.5 V608.5 H1450.5 V606.5 H1480.5 V607.5 H1564.5 V608.5 H1573.5 V606.5 H1580.5 V603.5 H1671.5 V604.5 H1678.5 V605.5 H1694.5 V608.5 H1701.5 V612.5 H1718.5 V611.5 H1771.5 V610.5 H1785.5 V611.5 H1817.5 V609.5 H1825.5 V606.5 H1839.5 V607.5 H1862.5 V607.5" stroke="#800000" stroke-width="1" fill="none"/><rect x="28" y="618.5" width="885" height="397.5" fill="#cdcdcd"/><rect x="913" y="618.5" width="949" height="176.3" fill="#feebcd"/><rect x="913" y="794.8" width="949" height="221.2" fill="#e0efd4"/><path d="M29 971.5 H913" stroke="#bdbdbd" stroke-width="1"/><path d="M913 971.5 H1862" stroke="#cddcc4" stroke-width="1"/><path d="M29 927.5 H913" stroke="#bdbdbd" stroke-width="1"/><path d="M913 927.5 H1862" stroke="#cddcc4" stroke-width="1"/><path d="M29 883.5 H913" stroke="#bdbdbd" stroke-width="1"/><path d="M913 883.5 H1862" stroke="#cddcc4" stroke-width="1"/><path d="M29 839.5 H913" stroke="#bdbdbd" stroke-width="1"/><path d="M913 839.5 H1862" stroke="#cddcc4" stroke-width="1"/><path d="M29 794.5 H913" stroke="#bdbdbd" stroke-width="1"/><path d="M913 794.5 H1862" stroke="#d8dcc8" stroke-width="1"/><path d="M29 750.5 H913" stroke="#bdbdbd" stroke-width="1"/><path d="M913 750.5 H1862" stroke="#ecdcc2" stroke-width="1"/><path d="M29 706.5 H913" stroke="#bdbdbd" stroke-width="1"/><path d="M913 706.5 H1862" stroke="#ecdcc2" stroke-width="1"/><path d="M29 662.5 H913" stroke="#bdbdbd" stroke-width="1"/><path d="M913 662.5 H1862" stroke="#ecdcc2" stroke-width="1"/><path d="M28.5 618.5 V1016.5 H1862" stroke="#555" stroke-width="1.2" fill="none"/><path d="M80.5 1016 V1020" stroke="#111" stroke-width="1"/><path d="M172.5 1016 V1020" stroke="#111" stroke-width="1"/><path d="M263.5 1016 V1020" stroke="#111" stroke-width="1"/><path d="M355.5 1016 V1020" stroke="#111" stroke-width="1"/><path d="M447.5 1016 V1020" stroke="#111" stroke-width="1"/><path d="M538.5 1016 V1020" stroke="#111" stroke-width="1"/><path d="M630.5 1016 V1020" stroke="#111" stroke-width="1"/><path d="M722.5 1016 V1020" stroke="#111" stroke-width="1"/><path d="M814.5 1016 V1020" stroke="#111" stroke-width="1"/><path d="M905.5 1016 V1020" stroke="#111" stroke-width="1"/><path d="M997.5 1016 V1020" stroke="#111" stroke-width="1"/><path d="M1089.5 1016 V1020" stroke="#111" stroke-width="1"/><path d="M1180.5 1016 V1020" stroke="#111" stroke-width="1"/><path d="M1272.5 1016 V1020" stroke="#111" stroke-width="1"/><path d="M1364.5 1016 V1020" stroke="#111" stroke-width="1"/><path d="M1455.5 1016 V1020" stroke="#111" stroke-width="1"/><path d="M1547.5 1016 V1020" stroke="#111" stroke-width="1"/><path d="M1639.5 1016 V1020" stroke="#111" stroke-width="1"/><path d="M1730.5 1016 V1020" stroke="#111" stroke-width="1"/><path d="M1822.5 1016 V1020" stroke="#111" stroke-width="1"/><path d="M915.0 929 H923.0 M922.0 952 H932.0 M931.0 946 H940.0 M939.0 939 H946.0 M945.0 946 H954.0 M953.0 967 H962.0 M961.0 953 H970.0 M969.0 952 H978.0 M977.0 941 H985.0 M984.0 916 H992.0 M991.0 969 H1001.0 M1000.0 849 H1007.0 M1006.0 923 H1015.0 M1014.0 948 H1023.0 M1022.0 965 H1031.0 M1030.0 964 H1039.0 M1038.0 947 H1045.0 M1044.0 967 H1054.0 M1053.0 956 H1061.0 M1060.0 958 H1068.0 M1067.0 966 H1077.0 M1076.0 962 H1085.0 M1084.0 856 H1091.0 M1090.0 966 H1099.0 M1098.0 971 H1108.0 M1107.0 947 H1114.0 M1113.0 966 H1131.0 M1130.0 952 H1138.0 M1137.0 939 H1145.0 M1144.0 949 H1152.0 M1151.0 952 H1160.0 M1159.0 962 H1168.0 M1167.0 965 H1175.0 M1174.0 971 H1184.0 M1183.0 957 H1191.0 M1190.0 970 H1199.0 M1198.0 959 H1206.0 M1205.0 967 H1215.0 M1214.0 966 H1222.0 M1221.0 953 H1230.0 M1229.0 949 H1236.0 M1235.0 971 H1245.0 M1244.0 969 H1253.0 M1252.0 966 H1260.0 M1259.0 933 H1268.0 M1267.0 926 H1275.0 M1274.0 953 H1283.0 M1282.0 839 H1290.0 M1289.0 962 H1299.0 M1298.0 953 H1305.0 M1304.0 971 H1314.0 M1313.0 960 H1321.0 M1320.0 956 H1328.0 M1327.0 970 H1337.0 M1336.0 960 H1343.0 M1342.0 972 H1352.0 M1351.0 963 H1360.0 M1359.0 927 H1366.0 M1365.0 964 H1375.0 M1374.0 936 H1382.0 M1381.0 950 H1389.0 M1388.0 962 H1398.0 M1397.0 936 H1404.0 M1403.0 944 H1412.0 M1411.0 958 H1420.0 M1419.0 959 H1428.0 M1427.0 870 H1435.0 M1434.0 960 H1444.0 M1443.0 851 H1450.0 M1449.0 966 H1459.0 M1458.0 957 H1467.0 M1466.0 951 H1473.0 M1472.0 963 H1481.0 M1480.0 972 H1489.0 M1488.0 970 H1497.0 M1496.0 932 H1504.0 M1503.0 958 H1511.0 M1510.0 959 H1520.0 M1519.0 957 H1528.0 M1527.0 950 H1534.0 M1533.0 955 H1543.0 M1542.0 942 H1551.0 M1550.0 847 H1557.0 M1556.0 955 H1574.0 M1573.0 644 H1580.0 M1579.0 965 H1589.0 M1588.0 957 H1596.0 M1595.0 956 H1603.0 M1602.0 966 H1612.0 M1611.0 963 H1627.0 M1626.0 954 H1634.0 M1633.0 961 H1641.0 M1640.0 968 H1650.0 M1649.0 963 H1658.0 M1657.0 961 H1665.0 M1664.0 948 H1673.0 M1672.0 931 H1679.0 M1678.0 945 H1687.0 M1686.0 967 H1696.0 M1695.0 958 H1703.0 M1702.0 957 H1710.0 M1709.0 964 H1719.0 M1718.0 942 H1726.0 M1725.0 921 H1733.0 M1732.0 924 H1741.0 M1740.0 960 H1748.0 M1747.0 966 H1757.0 M1756.0 948 H1764.0 M1763.0 932 H1771.0 M1770.0 959 H1779.0 M1778.0 961 H1787.0 M1786.0 956 H1795.0 M1794.0 950 H1802.0 M1801.0 964 H1818.0 M1817.0 747 H1825.0 M1824.0 958 H1832.0 M1831.0 962 H1841.0 M1840.0 957 H1848.0 M1847.0 951 H1855.0 M1854.0 959 H1863.0 " stroke="#111" stroke-width="2" fill="none"/><path d="M922.5 929 V952 M931.5 952 V946 M939.5 946 V939 M945.5 939 V946 M953.5 946 V967 M961.5 967 V953 M969.5 953 V952 M977.5 952 V941 M984.5 941 V916 M991.5 916 V969 M1000.5 969 V849 M1006.5 849 V923 M1014.5 923 V948 M1022.5 948 V965 M1030.5 965 V964 M1038.5 964 V947 M1044.5 947 V967 M1053.5 967 V956 M1060.5 956 V958 M1067.5 958 V966 M1076.5 966 V962 M1084.5 962 V856 M1090.5 856 V966 M1098.5 966 V971 M1107.5 971 V947 M1113.5 947 V966 M1130.5 966 V952 M1137.5 952 V939 M1144.5 939 V949 M1151.5 949 V952 M1159.5 952 V962 M1167.5 962 V965 M1174.5 965 V971 M1183.5 971 V957 M1190.5 957 V970 M1198.5 970 V959 M1205.5 959 V967 M1214.5 967 V966 M1221.5 966 V953 M1229.5 953 V949 M1235.5 949 V971 M1244.5 971 V969 M1252.5 969 V966 M1259.5 966 V933 M1267.5 933 V926 M1274.5 926 V953 M1282.5 953 V839 M1289.5 839 V962 M1298.5 962 V953 M1304.5 953 V971 M1313.5 971 V960 M1320.5 960 V956 M1327.5 956 V970 M1336.5 970 V960 M1342.5 960 V972 M1351.5 972 V963 M1359.5 963 V927 M1365.5 927 V964 M1374.5 964 V936 M1381.5 936 V950 M1388.5 950 V962 M1397.5 962 V936 M1403.5 936 V944 M1411.5 944 V958 M1419.5 958 V959 M1427.5 959 V870 M1434.5 870 V960 M1443.5 960 V851 M1449.5 851 V966 M1458.5 966 V957 M1466.5 957 V951 M1472.5 951 V963 M1480.5 963 V972 M1488.5 972 V970 M1496.5 970 V932 M1503.5 932 V958 M1510.5 958 V959 M1519.5 959 V957 M1527.5 957 V950 M1533.5 950 V955 M1542.5 955 V942 M1550.5 942 V847 M1556.5 847 V955 M1573.5 955 V644 M1579.5 644 V965 M1588.5 965 V957 M1595.5 957 V956 M1602.5 956 V966 M1611.5 966 V963 M1626.5 963 V954 M1633.5 954 V961 M1640.5 961 V968 M1649.5 968 V963 M1657.5 963 V961 M1664.5 961 V948 M1672.5 948 V931 M1678.5 931 V945 M1686.5 945 V967 M1695.5 967 V958 M1702.5 958 V957 M1709.5 957 V964 M1718.5 964 V942 M1725.5 942 V921 M1732.5 921 V924 M1740.5 924 V960 M1747.5 960 V966 M1756.5 966 V948 M1763.5 948 V932 M1770.5 932 V959 M1778.5 959 V961 M1786.5 961 V956 M1794.5 956 V950 M1801.5 950 V964 M1817.5 964 V747 M1824.5 747 V958 M1831.5 958 V962 M1840.5 962 V957 M1847.5 957 V951 M1854.5 951 V959 " stroke="#111" stroke-width="1" fill="none"/></svg>
<div class="a " style="left:924px;top:591.17px;font-size:9.6px;color:#8b0808;letter-spacing:-0.2px">Jitter (ms)</div>
<div class="a " style="right:1893.5px;top:593.77px;text-align:right;font-size:11.5px;color:#8a1010">35</div>
<div class="a " style="right:1894px;top:617.19px;text-align:right;font-size:11px;color:#222;letter-spacing:-0.3px">180</div>
<div class="a " style="right:1893.5px;top:1004.19px;text-align:right;font-size:11px;color:#222">0</div>
<div class="a " style="left:29px;top:972.69px;font-size:11px;color:#b2b2b2;letter-spacing:-0.2px">20 ms</div>
<div class="a " style="left:29px;top:928.69px;font-size:11px;color:#b2b2b2;letter-spacing:-0.2px">40 ms</div>
<div class="a " style="left:29px;top:884.69px;font-size:11px;color:#b2b2b2;letter-spacing:-0.2px">60 ms</div>
<div class="a " style="left:29px;top:840.69px;font-size:11px;color:#b2b2b2;letter-spacing:-0.2px">80 ms</div>
<div class="a " style="left:29px;top:795.69px;font-size:11px;color:#b2b2b2;letter-spacing:-0.2px">100 ms</div>
<div class="a " style="left:29px;top:751.69px;font-size:11px;color:#b2b2b2;letter-spacing:-0.2px">120 ms</div>
<div class="a " style="left:29px;top:707.69px;font-size:11px;color:#b2b2b2;letter-spacing:-0.2px">140 ms</div>
<div class="a " style="left:29px;top:663.69px;font-size:11px;color:#b2b2b2;letter-spacing:-0.2px">160 ms</div>
<div class="a" style="left:15px;top:850px;font-size:11px;color:#333;transform-origin:0 0;transform:rotate(-90deg);letter-spacing:-0.2px">Latency (ms)</div>
<div class="a " style="right:43px;top:618.69px;text-align:right;font-size:11px;color:#c0182a">30</div>
<div class="a" style="left:1873px;top:790px;font-size:11px;color:#c0182a;transform-origin:0 0;transform:rotate(90deg);letter-spacing:-0.2px">Packet Loss %</div>
<div class="a " style="left:67.6px;top:1018.03px;font-size:10.6px;color:#163816;letter-spacing:-0.1px">11:01:30</div>
<div class="a " style="left:159.29px;top:1018.03px;font-size:10.6px;color:#163816;letter-spacing:-0.1px">11:02</div>
<div class="a " style="left:250.98px;top:1018.03px;font-size:10.6px;color:#163816;letter-spacing:-0.1px">11:02:30</div>
<div class="a " style="left:342.67px;top:1018.03px;font-size:10.6px;color:#163816;letter-spacing:-0.1px">11:03</div>
<div class="a " style="left:434.36px;top:1018.03px;font-size:10.6px;color:#163816;letter-spacing:-0.1px">11:03:30</div>
<div class="a " style="left:526.0500000000001px;top:1018.03px;font-size:10.6px;color:#163816;letter-spacing:-0.1px">11:04</div>
<div class="a " style="left:617.74px;top:1018.03px;font-size:10.6px;color:#163816;letter-spacing:-0.1px">11:04:30</div>
<div class="a " style="left:709.43px;top:1018.03px;font-size:10.6px;color:#163816;letter-spacing:-0.1px">11:05</div>
<div class="a " style="left:801.12px;top:1018.03px;font-size:10.6px;color:#163816;letter-spacing:-0.1px">11:05:30</div>
<div class="a " style="left:892.8100000000001px;top:1018.03px;font-size:10.6px;color:#163816;letter-spacing:-0.1px">11:06</div>
<div class="a " style="left:984.5px;top:1018.03px;font-size:10.6px;color:#163816;letter-spacing:-0.1px">11:06:30</div>
<div class="a " style="left:1076.1899999999998px;top:1018.03px;font-size:10.6px;color:#163816;letter-spacing:-0.1px">11:07</div>
<div class="a " style="left:1167.8799999999999px;top:1018.03px;font-size:10.6px;color:#163816;letter-spacing:-0.1px">11:07:30</div>
<div class="a " style="left:1259.57px;top:1018.03px;font-size:10.6px;color:#163816;letter-spacing:-0.1px">11:08</div>
<div class="a " style="left:1351.2599999999998px;top:1018.03px;font-size:10.6px;color:#163816;letter-spacing:-0.1px">11:08:30</div>
<div class="a " style="left:1442.9499999999998px;top:1018.03px;font-size:10.6px;color:#163816;letter-spacing:-0.1px">11:09</div>
<div class="a " style="left:1534.6399999999999px;top:1018.03px;font-size:10.6px;color:#163816;letter-spacing:-0.1px">11:09:30</div>
<div class="a " style="left:1626.33px;top:1018.03px;font-size:10.6px;color:#163816;letter-spacing:-0.1px">11:10</div>
<div class="a " style="left:1718.02px;top:1018.03px;font-size:10.6px;color:#163816;letter-spacing:-0.1px">11:10:30</div>
<div class="a " style="left:1809.7099999999998px;top:1018.03px;font-size:10.6px;color:#163816;letter-spacing:-0.1px">11:11:00</div>
<div class="a" style="left:1329px;top:657px;width:144px;height:36px;background:#fff;border:1px solid #a4a4a4;box-shadow:3px 3px 3px rgba(90,80,60,0.45)"></div>
<div class="a " style="left:1335.5px;top:659.81px;font-size:11.8px;color:#444;letter-spacing:-0.25px">Time: 21.3.2020 11:08:14.</div>
<div class="a " style="left:1335.5px;top:673.81px;font-size:11.8px;color:#444;letter-spacing:-0.25px">Latency: 25,3 ms.</div></body></html>
